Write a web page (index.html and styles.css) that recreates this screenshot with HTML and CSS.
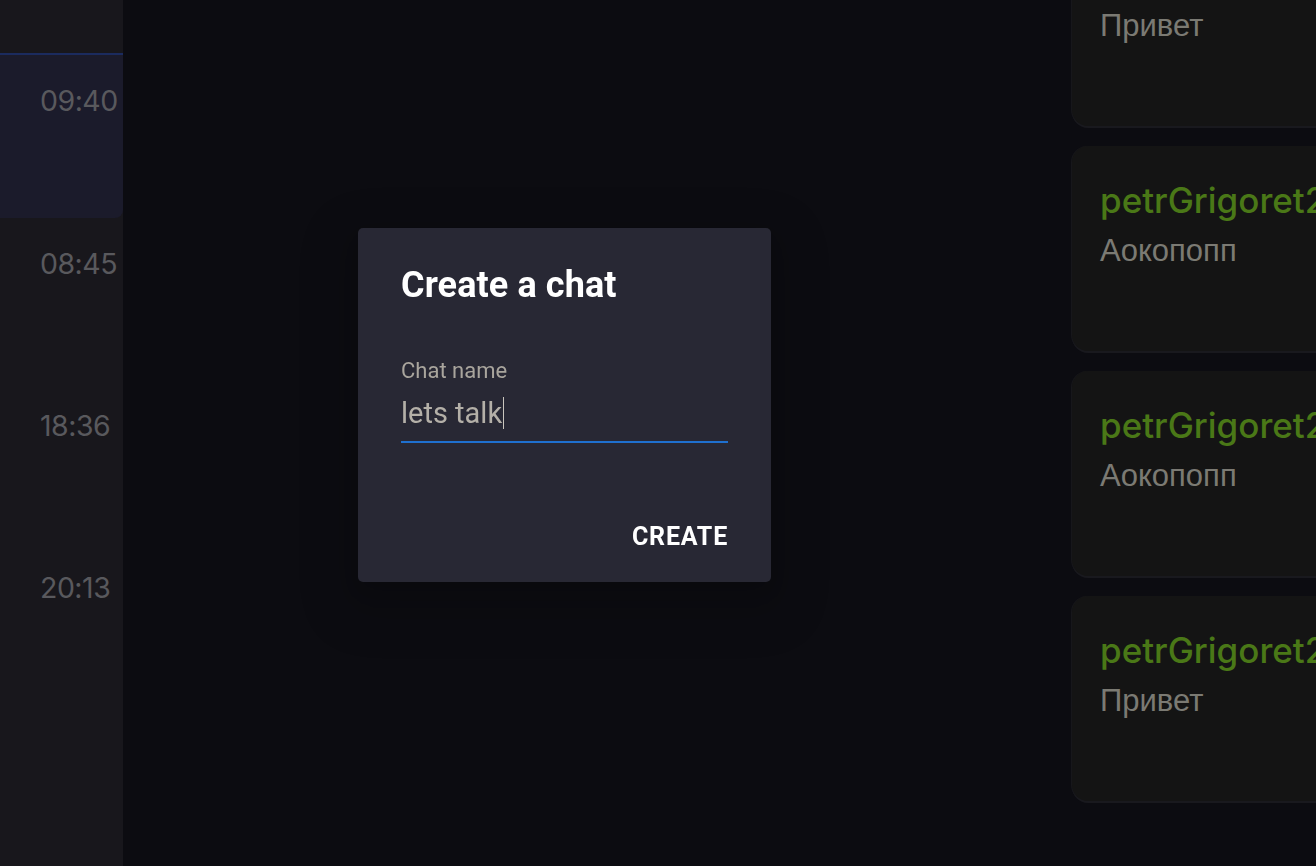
FILE: index.html
```html
<!DOCTYPE html>
<html lang="en">
<head>
<meta charset="utf-8">
<title>Create a chat</title>
<link rel="stylesheet" href="styles.css">
</head>
<body>
<div class="app">
  <aside class="sidebar">
    <div class="sidebar-top"></div>
    <div class="chat-item selected"><span class="time">09:40</span></div>
    <div class="chat-item"><span class="time">08:45</span></div>
    <div class="chat-item"><span class="time">18:36</span></div>
    <div class="chat-item"><span class="time">20:13</span></div>
  </aside>
  <main class="main"></main>
  <section class="messages">
    <div class="msg-card first">
      <div class="msg-name">petrGrigoret2</div>
      <div class="msg-text">Привет</div>
    </div>
    <div class="msg-card">
      <div class="msg-name">petrGrigoret2</div>
      <div class="msg-text">Аокопопп</div>
    </div>
    <div class="msg-card">
      <div class="msg-name">petrGrigoret2</div>
      <div class="msg-text">Аокопопп</div>
    </div>
    <div class="msg-card">
      <div class="msg-name">petrGrigoret2</div>
      <div class="msg-text">Привет</div>
    </div>
  </section>
</div>
<div class="backdrop">
  <div class="dialog">
    <h2 class="dialog-title">Create a chat</h2>
    <label class="field-label">Chat name</label>
    <div class="field-input"><span>lets talk</span><span class="caret"></span></div>
    <div class="dialog-actions"><button class="btn">CREATE</button></div>
  </div>
</div>
</body>
</html>
```
FILE: styles.css
```css
* { box-sizing: border-box; }
html, body {
  margin: 0;
  padding: 0;
  width: 1316px;
  height: 866px;
  overflow: hidden;
  background: #0c0c11;
}
.app {
  display: flex;
  height: 866px;
  width: 1316px;
}
.sidebar {
  width: 123px;
  flex: none;
  background: #18171c;
  display: flex;
  flex-direction: column;
}
.sidebar-top { height: 53px; flex: none; }
.chat-item {
  height: 162px;
  flex: none;
  display: flex;
  justify-content: flex-start;
  padding: 29px 0 0 40px;
}
.chat-item.selected {
  height: 165px;
  background: #1b1b2b;
  border-top: 2px solid #1b2b5e;
  border-bottom-right-radius: 8px;
  padding-top: 29px;
}
.time {
  font-family: "Inter", "Noto Sans", sans-serif;
  font-size: 28.5px;
  line-height: 34px;
  color: #59595d;
  letter-spacing: -0.5px;
}
.main { flex: 1; }
.messages {
  width: 244px;
  flex: none;
  display: flex;
  flex-direction: column;
  gap: 20px;
  margin-top: -79px;
}
.msg-card {
  height: 205px;
  flex: none;
  width: 300px;
  background: #141414;
  border-radius: 16px 0 0 16px;
  box-shadow: 0 2px 0 #19191e, -1px 0 0 #17171b;
  padding: 32px 0 0 28px;
  white-space: nowrap;
}
.msg-name {
  font-family: "Inter", "Noto Sans", sans-serif;
  font-weight: 500;
  font-size: 35px;
  line-height: 44px;
  color: #4a7817;
  letter-spacing: 0;
}
.msg-text {
  font-family: "Liberation Sans", Arial, sans-serif;
  font-size: 31px;
  line-height: 34px;
  margin-top: 12px;
  color: #7b7a73;
}
.backdrop {
  position: fixed;
  inset: 0;
  display: flex;
  align-items: flex-start;
  justify-content: flex-start;
  padding: 228px 0 0 358px;
}
.dialog {
  width: 413px;
  height: 354px;
  background: #282834;
  border-radius: 5px;
  padding: 37px 43px 31px 43px;
  display: flex;
  flex-direction: column;
  font-family: "Roboto", sans-serif;
  box-shadow: 0 18px 45px 18px rgba(0,0,0,0.13), 0 8px 20px 4px rgba(0,0,0,0.1);
}
.dialog-title {
  margin: 0;
  font-size: 36px;
  line-height: 40px;
  font-weight: 700;
  color: #ffffff;
  letter-spacing: 0.1px;
}
.field-label {
  margin-top: 54px;
  font-size: 22px;
  line-height: 24px;
  color: #a9a59d;
}
.field-input {
  margin-top: 12px;
  font-size: 29px;
  line-height: 36px;
  color: #b4b0a8;
  padding-bottom: 10px;
  border-bottom: 2px solid #1f70cf;
  display: flex;
  align-items: center;
}
.caret {
  display: inline-block;
  width: 1px;
  height: 32px;
  background: #c9c5bd;
  margin-left: 1px;
}
.dialog-actions {
  margin-top: auto;
  display: flex;
  justify-content: flex-end;
}
.btn {
  background: none;
  border: 0;
  padding: 0;
  font-family: "Roboto", sans-serif;
  font-size: 25px;
  line-height: 28px;
  font-weight: 700;
  letter-spacing: 0.8px;
  color: #ffffff;
}
```
